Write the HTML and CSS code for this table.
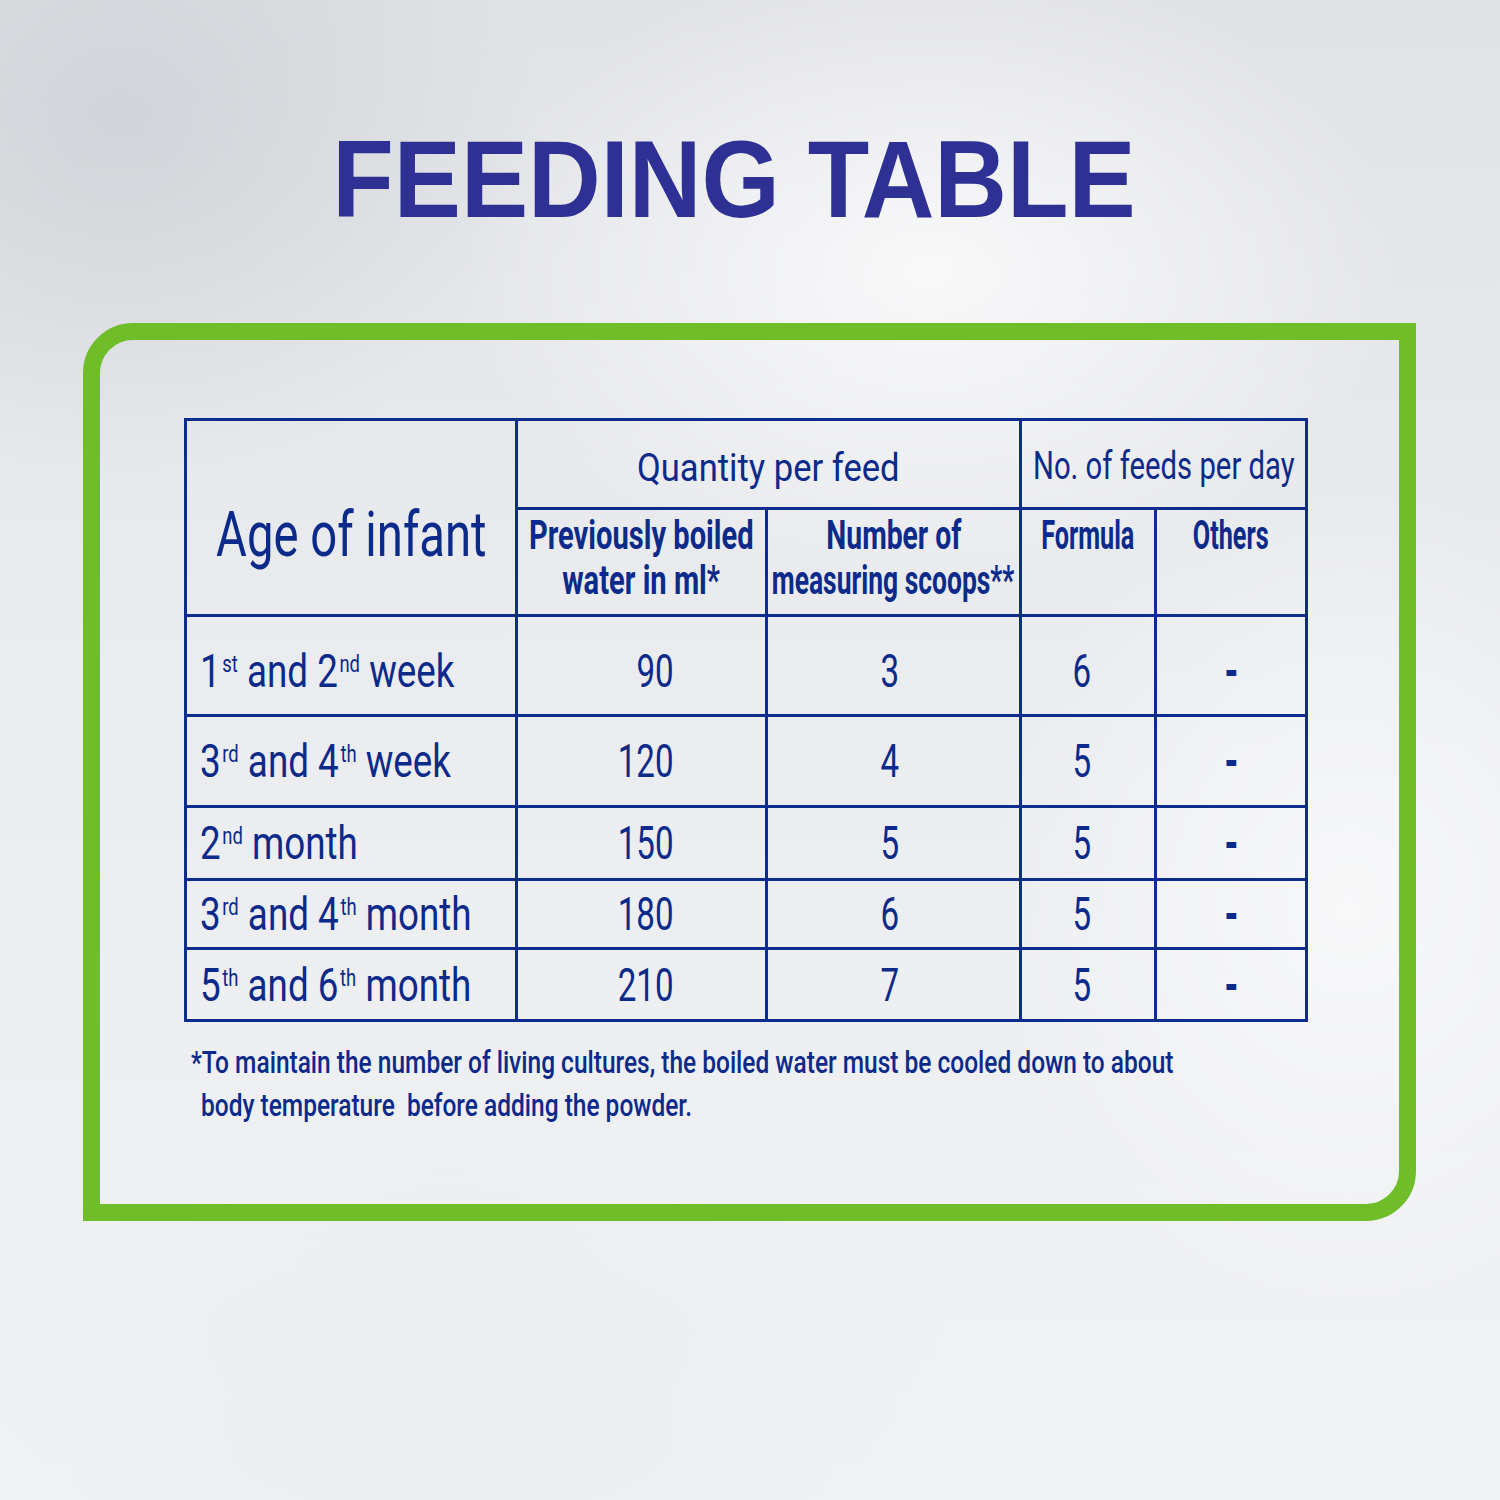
FILE: index.html
```html
<!DOCTYPE html>
<html lang="en">
<head>
<meta charset="utf-8">
<title>Feeding Table</title>
<link rel="stylesheet" href="styles.css">
</head>
<body>
<div class="page">
  <h1 class="title"><span class="title-text">FEEDING TABLE</span></h1>
  <div class="frame">
    <table class="feed">
      <colgroup>
        <col class="c-age">
        <col class="c-water">
        <col class="c-scoops">
        <col class="c-formula">
        <col class="c-others">
      </colgroup>
      <tr class="r-h1">
        <td rowspan="2" class="age-head"><div class="cell"><span class="t t-age">Age of infant</span></div></td>
        <td colspan="2"><div class="cell"><span class="t t-qty">Quantity per feed</span></div></td>
        <td colspan="2"><div class="cell"><span class="t t-no">No. of feeds per day</span></div></td>
      </tr>
      <tr class="r-h2">
        <td class="sub"><div class="cell stack"><span class="t t-b t-prev">Previously boiled</span><span class="t t-b t-prev">water in ml*</span></div></td>
        <td class="sub"><div class="cell stack"><span class="t t-b t-numof">Number of</span><span class="t t-b t-meas">measuring scoops**</span></div></td>
        <td class="sub"><div class="cell stack"><span class="t t-b t-short">Formula</span></div></td>
        <td class="sub"><div class="cell stack"><span class="t t-b t-short">Others</span></div></td>
      </tr>
      <tr class="r1">
        <td class="lbl"><div class="cell left low"><span class="t t-lbl">1<sup>st</sup> and 2<sup>nd</sup> week</span></div></td>
        <td class="num-w"><div class="cell right low"><span class="t t-num">90</span></div></td>
        <td class="num-s"><div class="cell low"><span class="t t-num">3</span></div></td>
        <td class="num-f"><div class="cell low"><span class="t t-num">6</span></div></td>
        <td><div class="cell low"><span class="t t-dash">-</span></div></td>
      </tr>
      <tr class="r2">
        <td class="lbl"><div class="cell left"><span class="t t-lbl">3<sup>rd</sup> and 4<sup>th</sup> week</span></div></td>
        <td class="num-w"><div class="cell right"><span class="t t-num">120</span></div></td>
        <td class="num-s"><div class="cell"><span class="t t-num">4</span></div></td>
        <td class="num-f"><div class="cell"><span class="t t-num">5</span></div></td>
        <td><div class="cell"><span class="t t-dash">-</span></div></td>
      </tr>
      <tr class="r3">
        <td class="lbl"><div class="cell left"><span class="t t-lbl">2<sup>nd</sup> month</span></div></td>
        <td class="num-w"><div class="cell right"><span class="t t-num">150</span></div></td>
        <td class="num-s"><div class="cell"><span class="t t-num">5</span></div></td>
        <td class="num-f"><div class="cell"><span class="t t-num">5</span></div></td>
        <td><div class="cell"><span class="t t-dash">-</span></div></td>
      </tr>
      <tr class="r4">
        <td class="lbl"><div class="cell left"><span class="t t-lbl">3<sup>rd</sup> and 4<sup>th</sup> month</span></div></td>
        <td class="num-w"><div class="cell right"><span class="t t-num">180</span></div></td>
        <td class="num-s"><div class="cell"><span class="t t-num">6</span></div></td>
        <td class="num-f"><div class="cell"><span class="t t-num">5</span></div></td>
        <td><div class="cell"><span class="t t-dash">-</span></div></td>
      </tr>
      <tr class="r5">
        <td class="lbl"><div class="cell left"><span class="t t-lbl">5<sup>th</sup> and 6<sup>th</sup> month</span></div></td>
        <td class="num-w"><div class="cell right"><span class="t t-num">210</span></div></td>
        <td class="num-s"><div class="cell"><span class="t t-num">7</span></div></td>
        <td class="num-f"><div class="cell"><span class="t t-num">5</span></div></td>
        <td><div class="cell"><span class="t t-dash">-</span></div></td>
      </tr>
    </table>
    <div class="note">
      <div class="note-line">*To maintain the number of living cultures, the boiled water must be cooled down to about</div>
      <div class="note-line second">body temperature&nbsp; before adding the powder.</div>
    </div>
  </div>
</div>
</body>
</html>
```

FILE: styles.css
```css
html, body {
  margin: 0;
  padding: 0;
}

body {
  width: 1500px;
  height: 1500px;
  overflow: hidden;
}

.page {
  width: 1500px;
  height: 1500px;
  box-sizing: border-box;
  padding-top: 124px;
  background:
    radial-gradient(ellipse 45% 30% at 62% 18%, rgba(255,255,255,0.75), rgba(255,255,255,0) 70%),
    radial-gradient(ellipse 40% 35% at 8% 8%, rgba(200,201,207,0.6), rgba(200,201,207,0) 70%),
    radial-gradient(ellipse 35% 40% at 90% 60%, rgba(255,255,255,0.6), rgba(255,255,255,0) 70%),
    radial-gradient(ellipse 50% 30% at 30% 95%, rgba(235,236,240,0.8), rgba(235,236,240,0) 70%),
    linear-gradient(180deg, #e1e2e6 0%, #eaecef 45%, #f1f2f4 100%);
  font-family: Roboto, "Liberation Sans", sans-serif;
  color: #0c2a8a;
}

.title {
  margin: 0;
  padding-right: 32px;
  text-align: center;
  font-family: "Liberation Sans", Arial, sans-serif;
  font-weight: 700;
  font-size: 110px;
  line-height: 110px;
  color: #2e3193;
}

.title-text {
  display: inline-block;
  transform: scaleX(0.915);
  transform-origin: center;
}

.frame {
  margin: 89px 0 0 83px;
  width: 1333px;
  height: 898px;
  box-sizing: border-box;
  border: 17px solid #70bd2a;
  border-radius: 50px 0 50px 0;
  padding: 78px 0 0 84px;
}

.feed {
  border-collapse: collapse;
  table-layout: fixed;
  width: 1121px;
  border: 3px solid #0e2c8e;
}

.c-age { width: 331px; }
.c-water { width: 250px; }
.c-scoops { width: 254px; }
.c-formula { width: 135px; }
.c-others { width: 151px; }

.feed td {
  border: 3px solid #0e2c8e;
  padding: 0;
  vertical-align: middle;
}

.r-h1 td { height: 86px; }
.r-h2 td { height: 104px; }
.r1 td { height: 97px; }
.r2 td { height: 88px; }
.r3 td { height: 70px; }
.r4 td { height: 66px; }
.r5 td { height: 69px; }

.cell {
  display: flex;
  justify-content: center;
  align-items: center;
  white-space: nowrap;
}

.cell.left {
  justify-content: flex-start;
  padding-left: 13px;
}

.cell.right {
  justify-content: flex-end;
  padding-right: 91px;
}

.num-s .cell {
  padding-right: 8px;
}

.num-f .cell {
  padding-right: 12px;
}

.cell.low {
  padding-top: 10px;
}

.cell.stack {
  flex-direction: column;
  justify-content: flex-start;
  padding-top: 1px;
}

.feed td.sub {
  vertical-align: top;
}

.age-head .cell {
  padding-top: 34px;
}

.t {
  display: inline-block;
  transform-origin: center;
}

.t-age {
  font-size: 63px;
  line-height: 70px;
  transform: scaleX(0.75);
}

.t-qty {
  font-size: 38px;
  line-height: 44px;
  transform: scaleX(0.91);
  padding-top: 8px;
}

.t-no {
  font-size: 38px;
  line-height: 44px;
  transform: scaleX(0.77);
  padding-top: 4px;
}

.t-b {
  font-size: 41px;
  line-height: 48px;
  font-weight: 700;
}

.t-b + .t-b {
  margin-top: -3px;
}

.t-prev { transform: scaleX(0.71); }
.t-numof { transform: scaleX(0.69); }
.t-meas { transform: scaleX(0.645); }
.t-short { transform: scaleX(0.615); }

.t-lbl {
  font-size: 46px;
  line-height: 52px;
  transform: scaleX(0.8);
  transform-origin: left center;
}

.t-lbl sup {
  font-size: 23px;
  line-height: 0;
  vertical-align: 15px;
  margin-left: 2px;
}

.t-num {
  font-size: 46px;
  line-height: 52px;
  transform: scaleX(0.72);
}

.t-dash {
  font-size: 46px;
  line-height: 52px;
  font-weight: 900;
  transform: scaleX(0.72);
}

.right .t-num {
  transform-origin: right center;
}

.note {
  margin-top: 19px;
  padding-left: 7px;
  font-weight: 500;
  font-size: 31px;
  line-height: 43px;
  color: #0c2a8a;
}

.note-line {
  width: max-content;
  transform: scaleX(0.79);
  transform-origin: left center;
  white-space: nowrap;
}

.note-line.second {
  margin-left: 10px;
}
```
